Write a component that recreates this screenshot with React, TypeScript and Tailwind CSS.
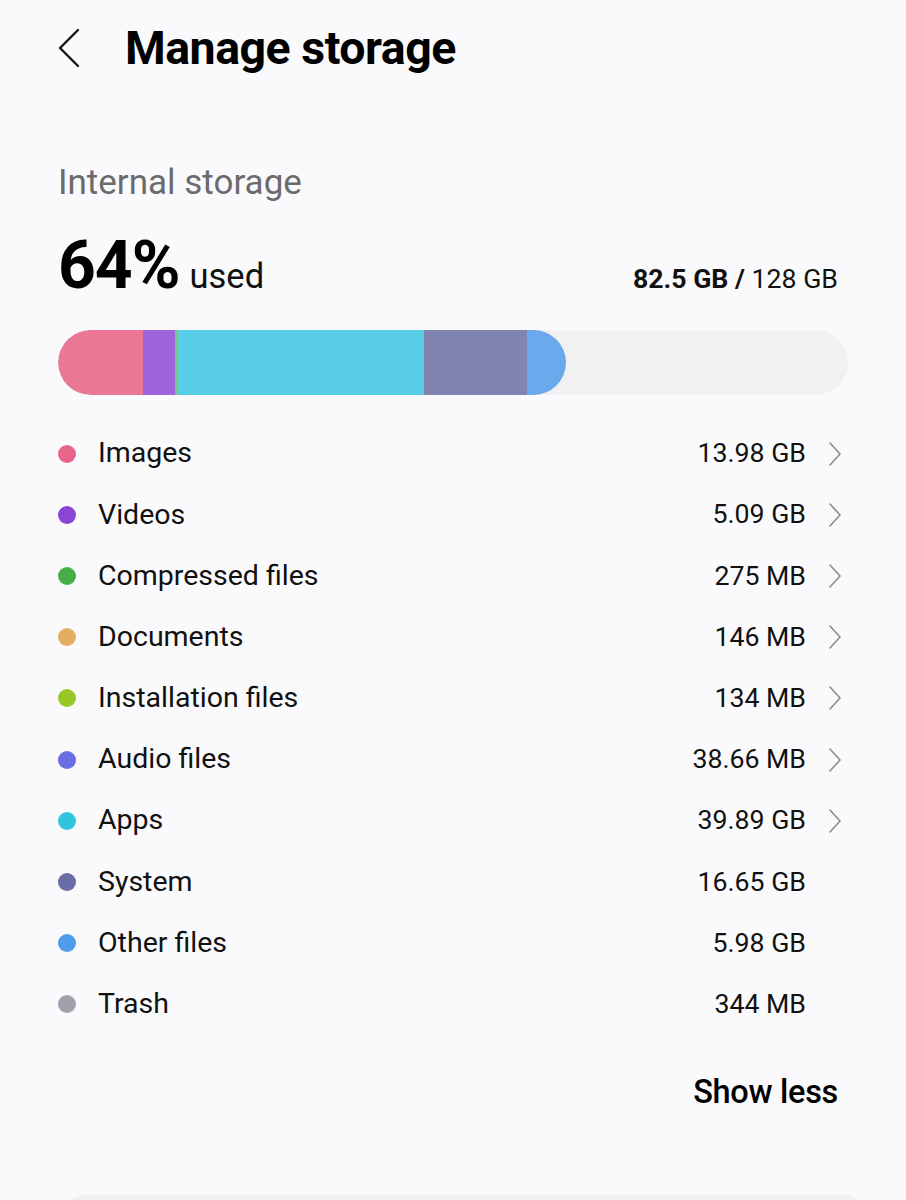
import React from "react";

const rows = [
  { label: "Images", value: "13.98 GB", color: "#e8648a", chevron: true },
  { label: "Videos", value: "5.09 GB", color: "#8b44d6", chevron: true },
  { label: "Compressed files", value: "275 MB", color: "#46ad48", chevron: true },
  { label: "Documents", value: "146 MB", color: "#e3ad64", chevron: true },
  { label: "Installation files", value: "134 MB", color: "#98c825", chevron: true },
  { label: "Audio files", value: "38.66 MB", color: "#6a6fe0", chevron: true },
  { label: "Apps", value: "39.89 GB", color: "#31c4de", chevron: true },
  { label: "System", value: "16.65 GB", color: "#6a6ca6", chevron: false },
  { label: "Other files", value: "5.98 GB", color: "#4f9ced", chevron: false },
  { label: "Trash", value: "344 MB", color: "#a1a1ab", chevron: false },
];

function Chevron() {
  return (
    <svg width="14" height="26" viewBox="0 0 14 26" className="block">
      <path d="M2 2 L12 13 L2 24" fill="none" stroke="#8c8c8c" strokeWidth="1.6" strokeLinecap="round" strokeLinejoin="round" />
    </svg>
  );
}

export default function App() {
  return (
    <div
      className="w-[906px] h-[1200px] overflow-hidden bg-[#fafafc] text-[#111111] relative"
      style={{ fontFamily: "Roboto, 'Noto Sans', sans-serif" }}
    >
      <div className="flex items-center h-[96px] pl-[56px]">
        <svg width="26" height="42" viewBox="0 0 26 42" className="block">
          <path d="M22 3 L4 21 L22 39" fill="none" stroke="#111" strokeWidth="2.4" strokeLinecap="round" strokeLinejoin="round" />
        </svg>
        <div className="ml-[43px] text-[46.5px] font-bold tracking-[-0.5px] text-black leading-none">
          Manage storage
        </div>
      </div>

      <div className="px-[58px]">
        <div className="mt-[67px] text-[35px] leading-[40px] text-[#6b6b6e]">Internal storage</div>

        <div className="mt-[30px] flex items-baseline justify-between h-[64px]">
          <div className="flex items-baseline">
            <span className="text-[66px] font-bold leading-none tracking-[-1px] text-black">64%</span>
            <span className="ml-[10px] text-[34.5px] leading-none">used</span>
          </div>
          <div className="text-[26.7px] leading-none pr-[10px]">
            <span className="font-bold">82.5 GB /</span> 128 GB
          </div>
        </div>

        <div className="mt-[33px] h-[65px] w-[790px] rounded-full bg-[#f1f1f2] overflow-hidden flex">
          <div className="flex h-full w-[508px] rounded-full overflow-hidden">
            <div className="h-full w-[85px] bg-[#eb7797]" />
            <div className="h-full w-[32px] bg-[#9f63da]" />
            <div className="h-full w-[2px] bg-[#7cc37c]" />
            <div className="h-full w-[247px] bg-[#58cde6]" />
            <div className="h-full w-[103px] bg-[#8183b0]" />
            <div className="h-full flex-1 bg-[#6aa9ec]" />
          </div>
        </div>

        <div className="mt-[28px] flex flex-col">
          {rows.map((r) => (
            <div key={r.label} className="flex items-center h-[61.2px]">
              <div className="w-[18px] h-[18px] rounded-full" style={{ backgroundColor: r.color }} />
              <div className="ml-[22px] text-[28.5px] leading-none flex-1">{r.label}</div>
              <div className="text-[26.7px] leading-none">{r.value}</div>
              <div className="w-[42px] flex justify-end pr-[6px]">
                {r.chevron ? <Chevron /> : null}
              </div>
            </div>
          ))}
        </div>

        <div className="mt-[41px] flex justify-end pr-[10px]">
          <span className="text-[32.5px] font-medium leading-none text-black tracking-[-0.3px]">Show less</span>
        </div>
      </div>

      <div className="absolute left-[60px] right-[36px] top-[1195px] h-[40px] rounded-t-[26px] bg-[#f1f1f4]" />
    </div>
  );
}
